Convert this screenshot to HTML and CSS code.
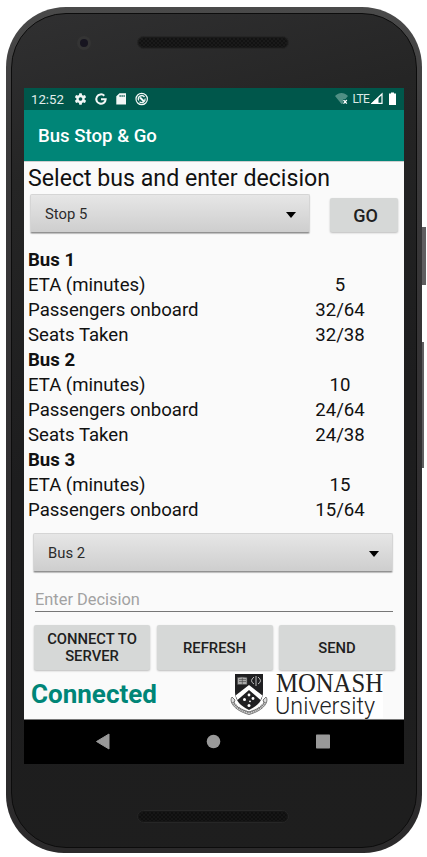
FILE: index.html
```html
<!DOCTYPE html>
<html lang="en">
<head>
<meta charset="utf-8">
<title>Bus Stop &amp; Go</title>
<link rel="stylesheet" href="styles.css">
</head>
<body>
<div class="phone">
  <i class="power"></i><i class="volume"></i>
  <div class="face">
    <header class="top">
      <i class="camera"></i>
      <svg class="speaker" width="152" height="13"><defs><pattern id="dots" width="4" height="4" patternUnits="userSpaceOnUse"><circle cx="1" cy="1" r=".8" fill="#050505"/><circle cx="3" cy="3" r=".8" fill="#050505"/></pattern></defs><rect x=".5" y=".5" width="151" height="12" rx="6" fill="#1a1a1a" stroke="#252525"/><rect x="2" y="2" width="148" height="9" rx="4.5" fill="url(#dots)"/></svg>
    </header>
    <main class="screen">
      <div class="status">
        <span class="clock">12:52</span>
        <svg class="icons" width="76" height="22" fill="#f2f7f6">
          <g transform="translate(6.500 11)"><circle r="3" fill="none" stroke="#f2f7f6" stroke-width="2.400"/><path d="M-1.200-5.800h2.400l.4 2.200h-3.200zM-1.200 5.800h2.400l.4-2.200h-3.200z"/><path transform="rotate(60)" d="M-1.200-5.800h2.400l.4 2.200h-3.200zM-1.200 5.800h2.400l.4-2.200h-3.200z"/><path transform="rotate(120)" d="M-1.200-5.800h2.400l.4 2.200h-3.200zM-1.200 5.800h2.400l.4-2.200h-3.200z"/></g>
          <path d="M30.300 7.700A4.700 4.700 0 1 0 31.700 11.200H27" fill="none" stroke="#f2f7f6" stroke-width="2"/>
          <path fill-rule="evenodd" d="M45.500 5.300h6.500v11.300h-9.700V8.300zM45.600 7v2h1V7zm2 0v2h1V7zm2 0v2h1V7z"/>
          <g fill="none" stroke="#f2f7f6"><circle cx="67.700" cy="11" r="5.700" stroke-width="1.200"/><path d="M64.700 12.500a3.400 3.400 0 0 1 5.800-3.500M71 10.500a3.400 3.400 0 0 1-5.500 3.300" stroke-width="1.300"/><path d="M66 9.500l4 4" stroke-width="2"/></g>
        </svg>
        <span class="space"></span>
        <svg class="wifi" width="14" height="22"><path d="M0 8C4 4 9 4 13 8L10.500 11H8v4.500L6.500 16z" fill="#4f8f84"/><path d="M8.500 12l3.300 3.600m0-3.600l-3.300 3.600" stroke="#fff" stroke-width="1.300"/></svg>
        <span class="lte">LTE</span>
        <svg width="12" height="22"><path d="M11 6v9.300H1.200z" fill="none" stroke="#fff" stroke-width="1.200"/><path d="M0 16L7.500 9v7z" fill="#fff"/></svg>
        <svg class="battery" width="7" height="22"><path d="M2 4.500h3v1h2v11.500H0V5.500h2z" fill="#fff"/></svg>
      </div>
      <div class="appbar">Bus Stop &amp; Go</div>
      <div class="content">
        <h1>Select bus and enter decision</h1>
        <div class="pick">
          <div class="spinner">Stop 5<i class="caret"></i></div>
          <div class="btn go">GO</div>
        </div>
        <div class="list">
          <b>Bus 1</b>
          <span>ETA (minutes)</span><em>5</em>
          <span>Passengers onboard</span><em>32/64</em>
          <span>Seats Taken</span><em>32/38</em>
          <b>Bus 2</b>
          <span>ETA (minutes)</span><em>10</em>
          <span>Passengers onboard</span><em>24/64</em>
          <span>Seats Taken</span><em>24/38</em>
          <b>Bus 3</b>
          <span>ETA (minutes)</span><em>15</em>
          <span>Passengers onboard</span><em>15/64</em>
        </div>
        <div class="spinner bus">Bus 2<i class="caret"></i></div>
        <div class="field">Enter Decision</div>
        <div class="actions">
          <div class="btn first">CONNECT TO<br>SERVER</div>
          <div class="btn">REFRESH</div>
          <div class="btn">SEND</div>
        </div>
        <div class="foot">
          <strong>Connected</strong>
          <svg class="logo" width="153" height="46">
            <rect width="153" height="46" fill="#fff"/>
            <g transform="translate(0 2)">
            <path d="M2 23C-1 27 3 36 19 40.500 35 36 39 27 36 23l-3 3 1 3c-2 4-8 7-15 9-7-2-13-5-15-9l1-3z" fill="#ddd" stroke="#555" stroke-width=".8"/>
            <path d="M3 28q4 7 16 10.500Q31 35 35 28" fill="none" stroke="#777" stroke-width="2.200" stroke-dasharray="1 1"/>
            <path d="M5 0h28v18c0 9-6 14-14 18C11 32 5 27 5 18z" fill="#202022"/>
            <path d="M5.500 21.500L19 11l13.500 10.500-2 4.500L19 16 7.500 26z" fill="#fff"/>
            <path d="M7.500 3.500l4.500-.5L17 3.500v7H7.500zM12.300 3.500v7M9 5.500h7M9 7.500h7" fill="#aaa" stroke="#444" stroke-width=".6"/>
            <g fill="none" stroke="#bbb"><path d="M26 2v10M24 3q-5 4 0 7M28 3q5 4 0 7"/></g>
            <g fill="#fff"><circle cx="19" cy="21" r="1.400"/><circle cx="14.500" cy="25.500" r="1.500"/><circle cx="23" cy="24.500" r="1.400"/><circle cx="20" cy="27.300" r=".9"/><circle cx="19" cy="31.500" r="1.500"/></g>
            </g>
            <text x="46" y="20" textLength="107" lengthAdjust="spacingAndGlyphs" class="monash">MONASH</text>
            <text x="45" y="42" textLength="100" lengthAdjust="spacingAndGlyphs" class="uni">University</text>
          </svg>
        </div>
      </div>
      <nav class="nav">
        <svg width="380" height="44" fill="#999"><path d="M72.500 21.500L85 14v15z" stroke="#999" stroke-linejoin="round"/><circle cx="189.500" cy="21.500" r="6.800"/><rect x="292" y="14.500" width="14" height="14" rx=".7"/></svg>
      </nav>
    </main>
    <footer class="bottom"><svg class="speaker" width="152" height="13"><rect x=".5" y=".5" width="151" height="12" rx="6" fill="#161616" stroke="#262626"/><rect x="2" y="2" width="148" height="9" rx="4.500" fill="url(#dots)"/></svg></footer>
  </div>
</div>
</body>
</html>
```
FILE: styles.css
```css
* { box-sizing: border-box; }
body { margin: 0; background: #fff; font-family: Roboto, sans-serif; color: #111; width: 427px; height: 857px; overflow: hidden; }
svg { display: block; flex: none; }
.phone { position: relative; width: 416px; height: 846px; margin: 7px 0 0 6px; padding: 6px 5px 5px 5px; border-radius: 60px 60px 58px 58px; background: linear-gradient(#4a4a4a, #3b3a3b 15%, #302e30 60%, #2b2a2b); }
.face { width: 100%; height: 100%; border-radius: 55px; background: linear-gradient(165deg, #303031, #252525 18%, #1d1d1e 50%, #1e1e1e); border: 1px solid #0c0c0c; padding: 0 12px; overflow: hidden; }
.power, .volume { position: absolute; background: #605e60; }
.power { left: 416px; top: 220px; width: 4px; height: 58px; }
.volume { left: 416px; top: 335px; width: 2px; height: 126px; }
.top { height: 74px; display: flex; align-items: flex-start; }
.camera { width: 14px; height: 14px; margin: 22px 46px 0 53px; border: 3px solid #343434; border-radius: 50%; background: #171520; }
.top .speaker { margin-top: 22px; }
.screen { width: 380px; height: 676px; background: #fafafa; display: flex; flex-direction: column; }
.status { height: 22px; background: #00574b; color: #fff; display: flex; align-items: center; padding: 0 8px 0 7px; font-size: 13.2px; }
.clock { width: 43px; color: #e2eeec; }
.space { flex: 1; }
.wifi { margin-right: 2px; }
.lte { font-size: 12px; letter-spacing: -.8px; margin: 0 2px; color: #dce9e7; }
.battery { margin-left: 6px; }
.appbar { height: 51px; line-height: 53px; padding-left: 14px; background: #008577; color: #fff; font-size: 18.6px; font-weight: 500; }
.content { height: 558px; overflow: hidden; border-top: 1px solid #cfcfcf; }
h1 { margin: 1px 0 0 4px; font-weight: 400; font-size: 23.15px; line-height: 32px; height: 31px; white-space: nowrap; }
.pick { display: flex; padding-left: 6px; height: 39px; }
.spinner { width: 280px; height: 39px; line-height: 39px; padding: 2px 14px 0; font-size: 14.8px; display: flex; align-items: center; justify-content: space-between; background: linear-gradient(#e6e6e6, #cecece); border: 1px solid #d5d5d5; border-bottom: 1px solid #929292; border-radius: 2px; box-shadow: 0 1px 1px #bbb; color: #2b2b2b; }
.caret { border: 5.5px solid transparent; border-top: 6px solid #000; border-bottom: 0; margin-right: -1px; }
.btn { background: #d6d8d7; border-radius: 2px; box-shadow: 0 1px 2px #bbb; font-weight: 500; font-size: 14.8px; color: #202020; display: flex; align-items: center; justify-content: center; text-align: center; }
.go { width: 68px; height: 34px; margin: 4px 0 0 20px; font-size: 18px; padding-left: 3px; }
.list { display: grid; grid-template-columns: 257px 110px; grid-auto-rows: 25px; padding: 14px 0 0 4px; font-size: 18.6px; line-height: 26px; }
.list b { grid-column: 1 / 3; font-weight: 700; font-size: 18.6px; }
.list em { font-style: normal; text-align: center; }
.bus { width: 360px; margin: 11px 0 0 9px; }
.field { width: 358px; height: 30px; margin: 10px 0 0 11px; border-bottom: 1px solid #777; font-size: 16.4px; line-height: 35px; color: #a2a2a2; }
.actions { display: grid; grid-template-columns: 116px 116px 116px; gap: 6.500px; padding: 13px 0 0 10px; height: 60px; }
.actions .btn { height: 45px; line-height: 17px; padding-top: 1px; }
.foot { display: flex; height: 46px; padding-left: 7px; }
.foot strong { width: 199px; color: #008577; font-size: 26px; line-height: 44px; }
.logo { overflow: visible; }
.monash { font: 27px "Liberation Serif", serif; fill: #222; }
.uni { font: 300 24px Roboto, sans-serif; fill: #222; }
.nav { height: 45px; background: #000; border-top: 1px solid #777; }
.bottom { padding: 46px 0 0 113px; }
```
